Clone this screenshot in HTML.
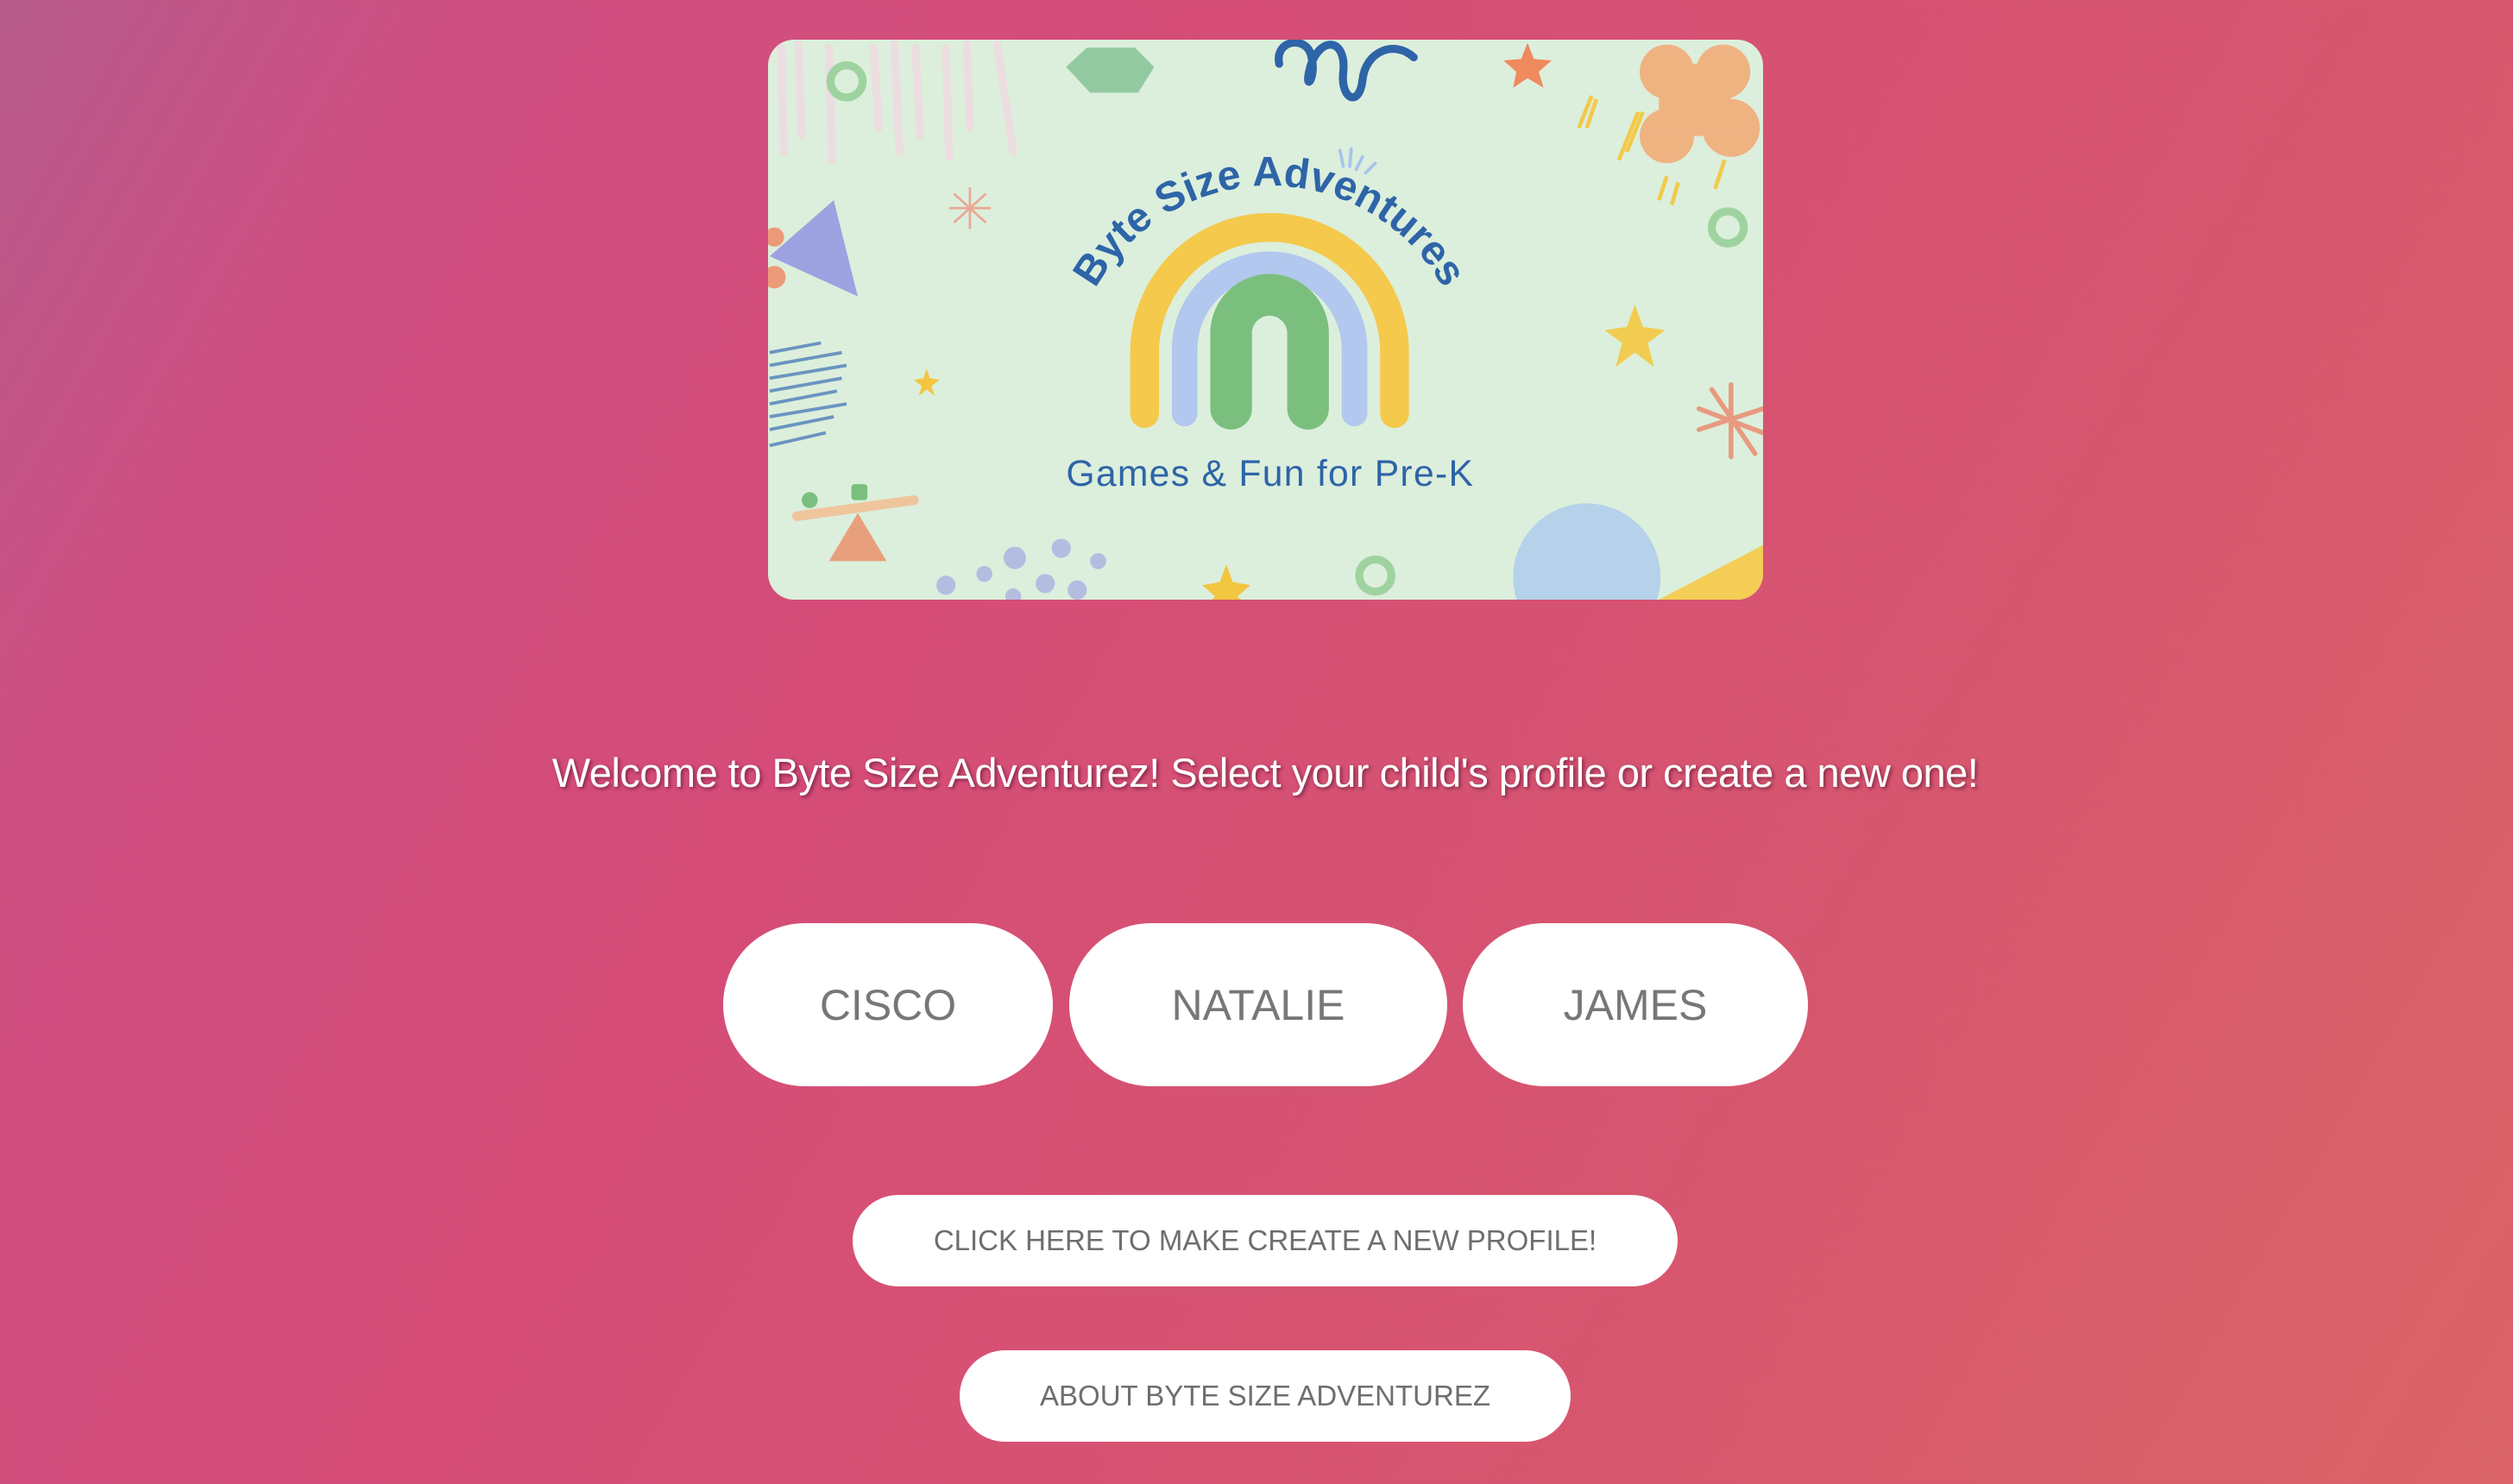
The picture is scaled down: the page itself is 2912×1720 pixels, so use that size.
<!DOCTYPE html>
<html><head><meta charset="utf-8">
<style>
html,body{margin:0;padding:0}
body{width:2912px;height:1720px;overflow:hidden;position:relative;font-family:"Liberation Sans",sans-serif;
background:linear-gradient(120deg,#b65b8c 0%,#cf4f82 14%,#d54c78 35%,#d7566f 70%,#da6466 100%);}
.card{position:absolute;left:890px;top:46px;width:1153px;height:649px;border-radius:30px;overflow:hidden}
.welcome{position:absolute;left:0;width:2932px;top:868px;text-align:center;color:#fff;font-size:47px;text-shadow:2px 2px 4px rgba(90,20,50,.7);letter-spacing:-0.5px}
.pill{position:absolute;background:#fff;border-radius:999px;color:#777;display:flex;align-items:center;justify-content:center}
.big{top:1070px;height:189px;font-size:50px}
.small{font-size:33px;color:#6e6e6e}
</style></head><body>
<div class="card">
<svg width="1153" height="649" viewBox="479 25 621 349" preserveAspectRatio="none">
<rect x="479" y="25" width="621" height="349" fill="#dcefdc"/>
<g stroke="#ecdde0" stroke-width="5" stroke-linecap="round">
<line x1="487" y1="30" x2="489" y2="95"/><line x1="498" y1="28" x2="500" y2="85"/><line x1="517" y1="30" x2="519" y2="100"/><line x1="545" y1="30" x2="548" y2="80"/><line x1="558" y1="28" x2="561" y2="95"/><line x1="571" y1="30" x2="574" y2="85"/><line x1="590" y1="30" x2="592" y2="98"/><line x1="603" y1="28" x2="605" y2="80"/><line x1="622" y1="28" x2="632" y2="95"/>
</g>
<circle cx="528" cy="51" r="10" fill="none" stroke="#9ed3a0" stroke-width="5"/>
<polygon points="678,30 708,30 720,42 710,58 680,58 665,42" fill="#93c9a0"/>
<path d="M798 40 C795 25 815 22 818 35 C822 50 812 60 818 40 C825 22 840 25 838 45 C836 62 848 68 850 50 C852 32 870 25 882 36" fill="none" stroke="#2e64a8" stroke-width="5" stroke-linecap="round"/>
<polygon points="953,27 957,37 968,38 960,45 963,55 953,49 944,55 946,45 938,38 949,37" fill="#ef8a5e"/>
<g fill="#efb382"><circle cx="1040" cy="45" r="17"/><circle cx="1075" cy="45" r="17"/><circle cx="1040" cy="85" r="17"/><circle cx="1080" cy="80" r="18"/><rect x="1035" y="40" width="45" height="45"/></g>
<g stroke="#f3c94a" stroke-width="2.5"><path d="M985 80 l8 -20 M990 80 l6 -18 M1010 100 l12 -30 M1015 95 l10 -25 M1035 125 l5 -15 M1043 128 l4 -14 M1070 118 l6 -18"/></g>
<circle cx="1078" cy="142" r="10" fill="none" stroke="#9ed3a0" stroke-width="5"/>
<polygon points="1020,190 1025,204 1039,206 1028,214 1032,229 1020,220 1008,229 1012,214 1001,206 1015,204" fill="#f2cc50"/>
<g stroke="#e89a80" stroke-width="3" stroke-linecap="round"><path d="M1080 240 L1080 285 M1060 255 L1100 270 M1060 268 L1100 255 M1068 243 L1095 283"/></g>
<g stroke="#e9a896" stroke-width="1.5"><path d="M605 117 L605 143 M592 130 L618 130 M595 121 L615 139 M615 121 L595 139"/></g>
<polygon points="480,160 520,125 535,185" fill="#9ea2e0"/>
<circle cx="483" cy="148" r="6" fill="#ec9a78"/><circle cx="483" cy="173" r="7" fill="#ec9a78"/>
<g stroke="#6a94c0" stroke-width="2"><path d="M480 220 L512 214 M480 228 L525 220 M480 236 L528 228 M480 244 L525 236 M480 252 L522 244 M480 260 L528 252 M480 268 L520 260 M480 278 L515 270"/></g>
<polygon points="578,230 580,236 586,237 581,241 583,247 578,243 573,247 575,241 570,237 576,236" fill="#f2c640"/>
<line x1="497" y1="322" x2="570" y2="312" stroke="#efc59c" stroke-width="6" stroke-linecap="round"/>
<circle cx="505" cy="312" r="5" fill="#7bbf7e"/><rect x="531" y="302" width="10" height="10" rx="2" fill="#7bbf7e"/>
<polygon points="535,320 553,350 517,350" fill="#e8a07c"/>
<g fill="#b4bde0"><circle cx="590" cy="365" r="6"/><circle cx="614" cy="358" r="5"/><circle cx="633" cy="348" r="7"/><circle cx="652" cy="364" r="6"/><circle cx="662" cy="342" r="6"/><circle cx="685" cy="350" r="5"/><circle cx="672" cy="368" r="6"/><circle cx="632" cy="372" r="5"/></g>
<polygon points="765,352 769,363 780,365 772,372 774,374 756,374 758,372 750,365 761,363" fill="#f2c640"/>
<circle cx="858" cy="359" r="10" fill="none" stroke="#9ed3a0" stroke-width="5"/>
<circle cx="990" cy="360" r="46" fill="#b5d2ea"/>
<polygon points="1035,374 1100,340 1100,374" fill="#f3cd55"/>
<g fill="none" stroke-linecap="round">
<path d="M714 258 L714 220 A78 78 0 0 1 870 220 L870 258" stroke="#f5c94c" stroke-width="18"/>
<path d="M739 258 L739 218 A53 53 0 0 1 845 218 L845 258" stroke="#b2c8ee" stroke-width="16"/>
<path d="M768 255 L768 208 A24 24 0 0 1 816 208 L816 255" stroke="#7bbf7e" stroke-width="26"/>
<path id="arc" d="M668 240 A124 124 0 0 1 916 240" stroke="none"/>
<path d="M836 94 l2 10 M843 93 l-1 11 M850 98 l-4 8 M858 102 l-6 6" stroke="#a9c3ee" stroke-width="2"/>
</g>
<text font-family="Liberation Sans, sans-serif" font-weight="bold" font-size="26" fill="#2e64a8"><textPath href="#arc" startOffset="50%" text-anchor="middle">Byte Size Adventures</textPath></text>
<text x="792" y="303" text-anchor="middle" font-family="Liberation Sans, sans-serif" font-size="23" fill="#2e64a8" textLength="254">Games &amp; Fun for Pre-K</text>
</svg>
</div>
<div class="welcome">Welcome to Byte Size Adventurez! Select your child's profile or create a new one!</div>
<div class="pill big" style="left:838px;width:382px">CISCO</div>
<div class="pill big" style="left:1239px;width:438px">NATALIE</div>
<div class="pill big" style="left:1695px;width:400px">JAMES</div>
<div class="pill small" style="left:988px;width:956px;top:1385px;height:106px">CLICK HERE TO MAKE CREATE A NEW PROFILE!</div>
<div class="pill small" style="left:1112px;width:708px;top:1565px;height:106px">ABOUT BYTE SIZE ADVENTUREZ</div>
</body></html>
